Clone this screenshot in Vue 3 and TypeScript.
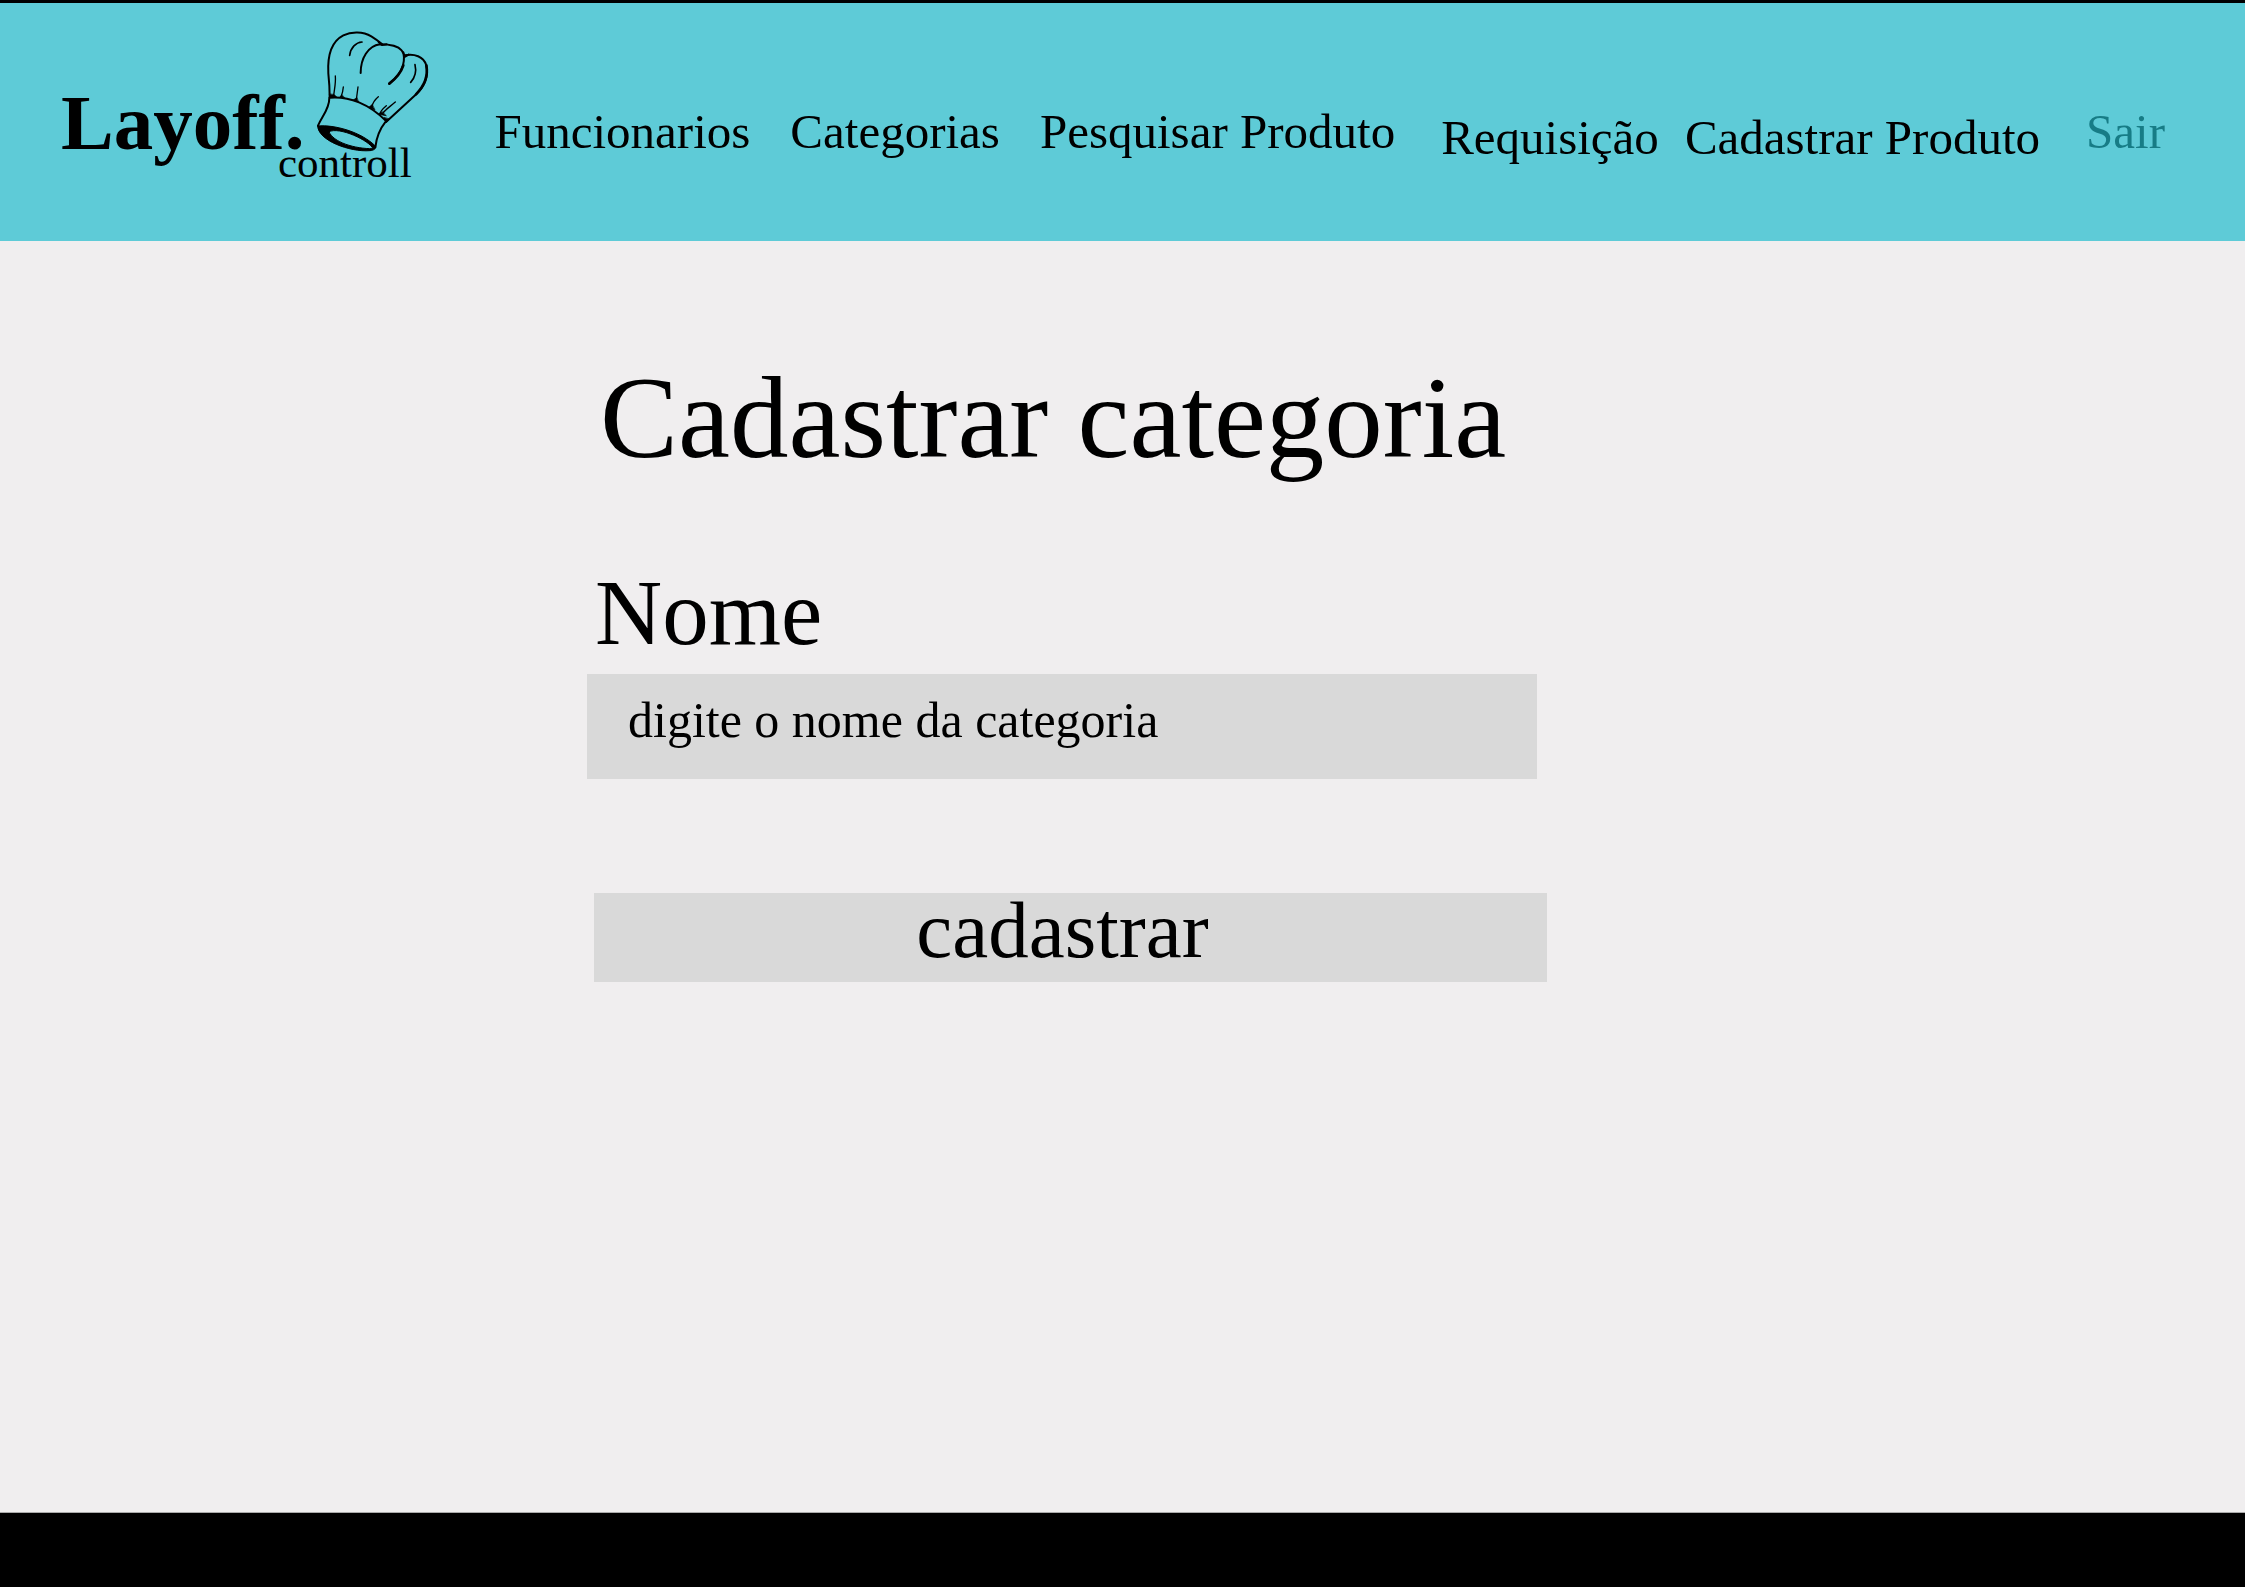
<script setup lang="ts">
import { ref } from 'vue'

interface NavLink {
  label: string
  href: string
}

interface NavGroup {
  kind: 'primary' | 'lower' | 'exit'
  links: NavLink[]
}

const groups: NavGroup[] = [
  {
    kind: 'primary',
    links: [
      { label: 'Funcionarios', href: '#funcionarios' },
      { label: 'Categorias', href: '#categorias' },
      { label: 'Pesquisar Produto', href: '#pesquisar' },
    ],
  },
  {
    kind: 'lower',
    links: [
      { label: 'Requisição', href: '#requisicao' },
      { label: 'Cadastrar Produto', href: '#cadastrar' },
    ],
  },
  { kind: 'exit', links: [{ label: 'Sair', href: '#sair' }] },
]

const nome = ref('')
</script>

<template>
  <div class="page">
    <header class="header">
      <a class="logo" href="#inicio">
        <svg width="380" height="160" viewBox="0 0 380 160" role="img" aria-label="Layoff. controll">
          <text class="brand" x="1" y="121">Layoff.</text>
          <text class="brand-sub" x="218" y="149">controll</text>
          <g transform="translate(230 -13) scale(0.3333)" fill="none" stroke="#000" stroke-width="6" stroke-linecap="round" stroke-linejoin="round">
            <!-- crown -->
            <path d="M119 246C119 218 118 203 115 175C112 120 127 78 160 61C184 49 219 49 244 64C257 72 266 79 276 87" />
            <path d="M212 174C212 130 234 93 270 88C300 88 324 93 335 106C344 116 343 137 339 151C332 176 317 191 298 206" />
            <path d="M343 121C373 115 401 124 409 151C417 187 401 219 377 239C348 266 318 293 289 320" />
            <path d="M409 151C415 183 401 215 378 238M340 151C332 176 317 191 298 206" stroke-width="8" />
            <path d="M266 81L276 90L290 88M340 112L344 126L356 119" stroke-width="6" />
            <!-- folds -->
            <path d="M179 121C182 98 198 82 216 81M375 149C380 170 375 188 362 202" stroke-width="5" />
            <path d="M136 183C138 207 132 226 131 245M160 216C159 230 156 238 153 246M204 216C202 233 200 244 199 256M265 245C253 255 248 264 245 276M316 261C300 275 287 283 278 295M289 272C277 282 270 290 269 299" stroke-width="4" />
            <path d="M118 238L120 248L141 247L133 239ZM155 240L148 248L163 248ZM200 248L190 255L205 261ZM246 269L236 277L254 284ZM276 291L266 298L288 302ZM282 308L288 323L299 313Z" fill="#000" stroke-width="2" />
            <!-- band -->
            <path d="M118 248C178 242 239 269 287 317M118 248C119 281 96 304 84 332M287 320C270 341 260 363 256 397" />
            <!-- opening -->
            <path fill="#000" fill-rule="evenodd" stroke-width="3" d="M83 333C135 328 216 352 257 394C258 402 251 406 240 407C179 412 83 376 83 333ZM117 350C128 382 196 402 249 401C239 377 148 334 117 350Z" />
          </g>
        </svg>
      </a>

      <nav class="nav" aria-label="Principal">
        <ul v-for="group in groups" :key="group.kind" class="nav-group" :class="group.kind">
          <li v-for="link in group.links" :key="link.label">
            <a :href="link.href">{{ link.label }}</a>
          </li>
        </ul>
      </nav>
    </header>

    <main class="content">
      <form class="form" @submit.prevent>
        <h1 class="title">Cadastrar categoria</h1>
        <label class="label" for="nome">Nome</label>
        <input id="nome" v-model="nome" class="field" type="text" placeholder="digite o nome da categoria" />
        <button class="submit" type="submit">cadastrar</button>
      </form>
    </main>

    <footer class="footer"></footer>
  </div>
</template>

<style>
body {
  margin: 0;
}
</style>

<style scoped>
.page {
  display: flex;
  flex-direction: column;
  min-height: 100vh;
  background: #f0eeef;
  color: #000;
  font-family: "Liberation Serif", "Times New Roman", serif;
}

.header {
  display: flex;
  align-items: flex-start;
  justify-content: space-between;
  box-sizing: border-box;
  min-height: 241px;
  padding: 25px 80px 0 60px;
  border-top: 3px solid #000;
  background: #5ecbd7;
}

.logo {
  flex: none;
  color: #000;
}

.logo svg {
  display: block;
}

.brand {
  font-size: 79px;
  font-weight: 700;
}

.brand-sub {
  font-size: 43px;
}

.nav {
  display: flex;
  gap: 46px;
  padding-top: 74px;
}

.nav-group {
  display: flex;
  gap: 40px;
  margin: 0;
  padding: 0;
  list-style: none;
  font-size: 49px;
  line-height: 60px;
  white-space: nowrap;
}

.nav-group.lower {
  gap: 26px;
  padding-top: 6px;
}

.nav-group a {
  color: #000;
  text-decoration: none;
}

.nav-group.exit a {
  color: #177c86;
}

.content {
  display: grid;
  flex: 1;
  grid-template-columns: 587fr 960fr 698fr;
  align-items: start;
  padding-top: 113px;
}

.form {
  display: flex;
  flex-direction: column;
  grid-column: 2;
}

.title {
  margin: 0 0 81px;
  padding-left: 13px;
  font-size: 117px;
  font-weight: 400;
  line-height: 128px;
  white-space: nowrap;
}

.label {
  margin-bottom: 11px;
  padding-left: 8px;
  font-size: 93px;
  line-height: 100px;
}

.field {
  box-sizing: border-box;
  height: 105px;
  margin: 0 10px 114px 0;
  padding: 0 41px 13px;
  border: 0;
  border-radius: 0;
  background: #d9d9d9;
  color: #000;
  font-family: inherit;
  font-size: 50px;
}

.field::placeholder {
  color: #000;
  opacity: 1;
}

.submit {
  box-sizing: border-box;
  height: 89px;
  margin: 0 0 0 7px;
  padding: 0 16px 16px 0;
  border: 0;
  border-radius: 0;
  background: #d9d9d9;
  color: #000;
  font-family: inherit;
  font-size: 81px;
  line-height: 72px;
}

.footer {
  box-sizing: border-box;
  height: 75px;
  border-top: 1px solid #aaa;
  background: #000;
}
</style>
